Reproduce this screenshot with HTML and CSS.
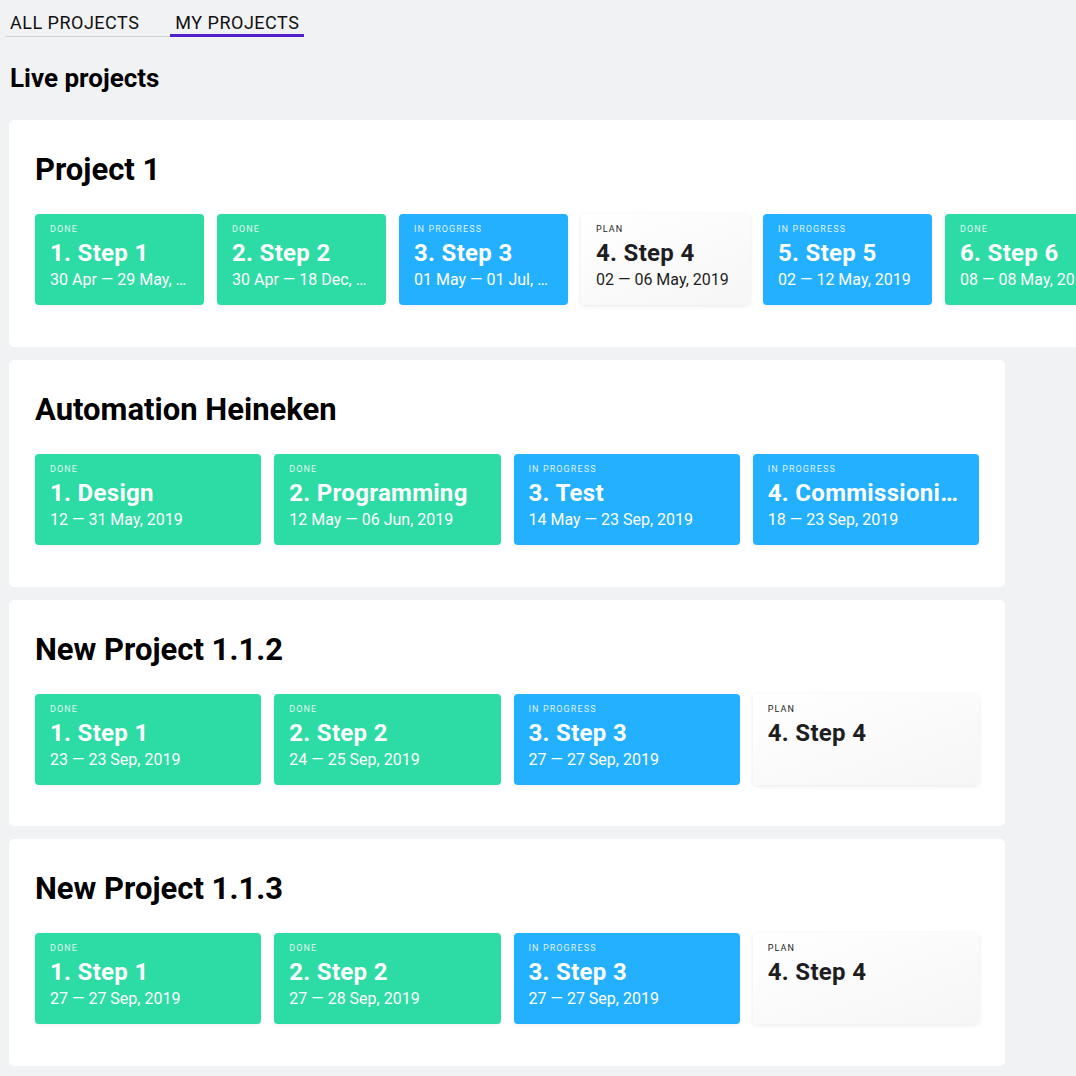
FILE: index.html
```html
<!DOCTYPE html>
<html lang="en">
<head>
<meta charset="utf-8">
<title>Projects</title>
<link rel="stylesheet" href="styles.css">
</head>
<body>
<div class="page">
  <nav class="tabs">
    <a class="tab">ALL PROJECTS</a>
    <a class="tab tab--active">MY PROJECTS</a>
  </nav>
  <h2 class="section-title">Live projects</h2>
  <div class="projects">
    <section class="project project--wide">
      <h1 class="project-title">Project 1</h1>
      <div class="steps">
        <div class="step step--done"><div class="step-status">DONE</div><div class="step-name">1. Step 1</div><div class="step-date">30 Apr — 29 May, 2019</div></div>
        <div class="step step--done"><div class="step-status">DONE</div><div class="step-name">2. Step 2</div><div class="step-date">30 Apr — 18 Dec, 2019</div></div>
        <div class="step step--progress"><div class="step-status">IN PROGRESS</div><div class="step-name">3. Step 3</div><div class="step-date">01 May — 01 Jul, 2019</div></div>
        <div class="step step--plan"><div class="step-status">PLAN</div><div class="step-name">4. Step 4</div><div class="step-date">02 — 06 May, 2019</div></div>
        <div class="step step--progress"><div class="step-status">IN PROGRESS</div><div class="step-name">5. Step 5</div><div class="step-date">02 — 12 May, 2019</div></div>
        <div class="step step--done"><div class="step-status">DONE</div><div class="step-name">6. Step 6</div><div class="step-date">08 — 08 May, 2019</div></div>
      </div>
    </section>
    <section class="project">
      <h1 class="project-title">Automation Heineken</h1>
      <div class="steps">
        <div class="step step--done"><div class="step-status">DONE</div><div class="step-name">1. Design</div><div class="step-date">12 — 31 May, 2019</div></div>
        <div class="step step--done"><div class="step-status">DONE</div><div class="step-name">2. Programming</div><div class="step-date">12 May — 06 Jun, 2019</div></div>
        <div class="step step--progress"><div class="step-status">IN PROGRESS</div><div class="step-name">3. Test</div><div class="step-date">14 May — 23 Sep, 2019</div></div>
        <div class="step step--progress"><div class="step-status">IN PROGRESS</div><div class="step-name">4. Commissioning</div><div class="step-date">18 — 23 Sep, 2019</div></div>
      </div>
    </section>
    <section class="project">
      <h1 class="project-title">New Project 1.1.2</h1>
      <div class="steps">
        <div class="step step--done"><div class="step-status">DONE</div><div class="step-name">1. Step 1</div><div class="step-date">23 — 23 Sep, 2019</div></div>
        <div class="step step--done"><div class="step-status">DONE</div><div class="step-name">2. Step 2</div><div class="step-date">24 — 25 Sep, 2019</div></div>
        <div class="step step--progress"><div class="step-status">IN PROGRESS</div><div class="step-name">3. Step 3</div><div class="step-date">27 — 27 Sep, 2019</div></div>
        <div class="step step--plan"><div class="step-status">PLAN</div><div class="step-name">4. Step 4</div><div class="step-date"></div></div>
      </div>
    </section>
    <section class="project">
      <h1 class="project-title">New Project 1.1.3</h1>
      <div class="steps">
        <div class="step step--done"><div class="step-status">DONE</div><div class="step-name">1. Step 1</div><div class="step-date">27 — 27 Sep, 2019</div></div>
        <div class="step step--done"><div class="step-status">DONE</div><div class="step-name">2. Step 2</div><div class="step-date">27 — 28 Sep, 2019</div></div>
        <div class="step step--progress"><div class="step-status">IN PROGRESS</div><div class="step-name">3. Step 3</div><div class="step-date">27 — 27 Sep, 2019</div></div>
        <div class="step step--plan"><div class="step-status">PLAN</div><div class="step-name">4. Step 4</div><div class="step-date"></div></div>
      </div>
    </section>
  </div>
</div>
</body>
</html>
```
FILE: styles.css
```css
* { box-sizing: border-box; }
html, body { margin: 0; padding: 0; }
body {
  background: #f1f2f4;
  font-family: Roboto, "Liberation Sans", Arial, sans-serif;
  color: #000;
  overflow: hidden;
}
.page {
  padding: 0 0 0 9px;
  width: 1005px;
}
.tabs {
  display: flex;
  gap: 26px;
  margin-left: -4px;
  width: max-content;
  border-bottom: 1px solid #cfd0d4;
  height: 37px;
}
.tab {
  display: block;
  flex: 0 0 auto;
  white-space: nowrap;
  font-size: 18px;
  line-height: 20px;
  letter-spacing: 0.5px;
  padding: 13px 5px 0 5px;
  color: #111;
  cursor: pointer;
}
.tab--active {
  border-bottom: 3px solid #5020c8;
  margin-bottom: -1px;
}
.section-title {
  font-size: 26px;
  font-weight: 700;
  margin: 26px 0 0 1px;
  line-height: 30px;
  height: 57px;
}
.projects {
  display: flex;
  flex-direction: column;
  gap: 13px;
}
.project {
  background: #fff;
  border-radius: 5px;
  padding: 26px 26px 41.7px 26px;
  width: 100%;
}
.project--wide {
  width: max-content;
  padding-bottom: 42px;
}
.project-title {
  font-size: 31px;
  font-weight: 700;
  line-height: 36px;
  margin: 6px 0 26px 0;
  color: #000;
}
.steps {
  display: flex;
  gap: 13px;
}
.step {
  flex: 1 1 0;
  min-width: 0;
  height: 91px;
  border-radius: 4px;
  padding: 10px 14px 0 15px;
  color: #fff;
  box-shadow: 0 1px 4px rgba(0, 0, 0, 0.07);
}
.project--wide .step {
  flex: 0 0 169px;
}
.step--done { background: #2ddba4; }
.step--progress { background: #23b0ff; }
.step--plan {
  background: linear-gradient(160deg, #ffffff 0%, #f6f6f7 100%);
  color: #1e1e22;
  box-shadow: 0 1px 5px rgba(0, 0, 0, 0.09);
}
.step-status {
  font-size: 9px;
  line-height: 10px;
  letter-spacing: 1.1px;
  opacity: 0.85;
}
.step--plan .step-status { opacity: 1; color: #222; }
.step-name {
  font-size: 24px;
  font-weight: 700;
  line-height: 28px;
  letter-spacing: 0.3px;
  margin-top: 5px;
  white-space: nowrap;
  overflow: hidden;
  text-overflow: ellipsis;
}
.step-date {
  font-size: 16px;
  line-height: 20px;
  margin-top: 3px;
  white-space: nowrap;
  overflow: hidden;
  text-overflow: ellipsis;
}
```
